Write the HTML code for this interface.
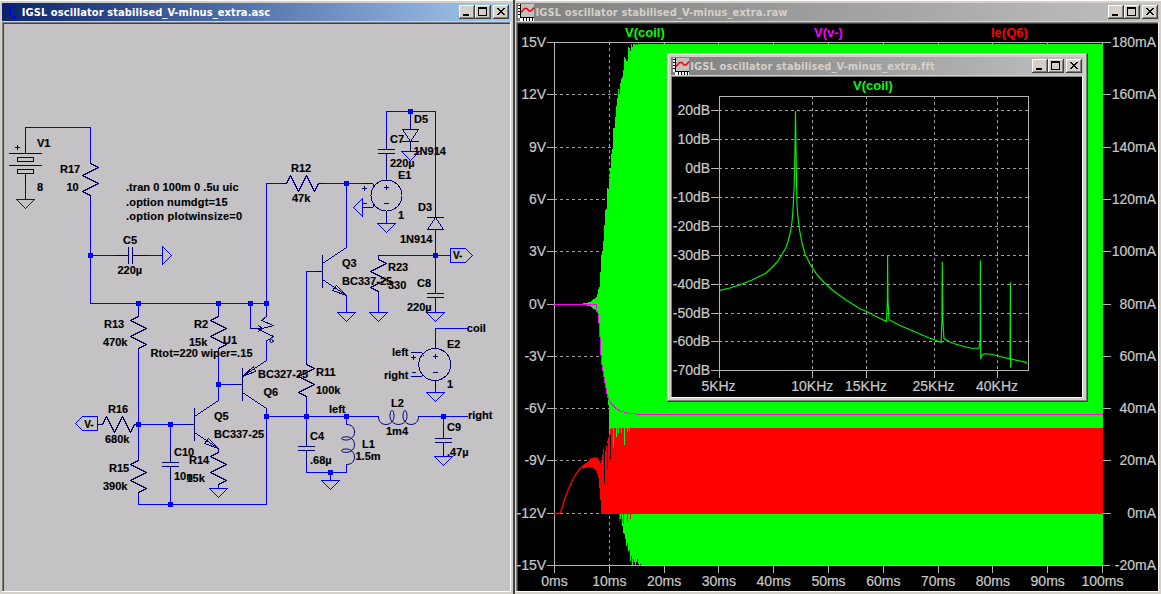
<!DOCTYPE html>
<html lang="en"><head><meta charset="utf-8"><title>IGSL oscillator stabilised_V-minus_extra</title>
<style>
html,body{margin:0;padding:0;background:#d4d0c8;overflow:hidden}
body{width:1161px;height:594px;position:relative}
svg{position:absolute;left:0;top:0;display:block}
text{white-space:pre}
.s{font:bold 11px "Liberation Sans",sans-serif;fill:#000;stroke:#000;stroke-width:.15px}
.f{font:bold 10px "Liberation Sans",sans-serif;fill:#000;stroke:#000;stroke-width:.2px}
.t{font:bold 11px "DejaVu Sans Condensed","DejaVu Sans","Liberation Sans",sans-serif;letter-spacing:.08px}
.a{font:14px "Liberation Sans",sans-serif;fill:#c8c8c8;stroke:#c8c8c8;stroke-width:.2px}
.l{font:bold 13px "Liberation Sans",sans-serif}
</style></head><body>
<svg width="1161" height="594" viewBox="0 0 1161 594">
<defs>
<linearGradient id="ga" x1="0" x2="1" y1="0" y2="0"><stop offset="0" stop-color="#0a246a"/><stop offset="1" stop-color="#a6caf0"/></linearGradient>
<linearGradient id="gi" x1="0" x2="1" y1="0" y2="0"><stop offset="0" stop-color="#808080"/><stop offset="1" stop-color="#c0c0c0"/></linearGradient>
</defs>
<rect x="0" y="0" width="1161" height="594" fill="#d4d0c8"/>
<rect x="0" y="0" width="1161" height="1" fill="#ffffff"/>
<g shape-rendering="crispEdges">
<rect x="2" y="3" width="509" height="18" fill="url(#ga)"/>
<rect x="2" y="22" width="509" height="1" fill="#808080"/>
<rect x="2" y="22" width="1" height="570" fill="#808080"/>
<rect x="3" y="23" width="508" height="1" fill="#404040"/>
<rect x="3" y="23" width="1" height="569" fill="#404040"/>
<rect x="4" y="24" width="506" height="567" fill="#c4c2c5"/>
<rect x="510" y="22" width="1" height="570" fill="#ffffff"/>
<rect x="2" y="591" width="509" height="1" fill="#ffffff"/>
<rect x="513" y="0" width="2" height="594" fill="#404040"/>
<rect x="515" y="0" width="1" height="594" fill="#dcd8d0"/>
</g>
<g stroke="#0000ff" fill="none" shape-rendering="crispEdges"><path d="M6 11.5H9"/><path d="M10 7V16" stroke-width="2"/></g>
<g stroke="#0000ff" fill="none"><path d="M11 8.5L15.5 4"/><path d="M11 14.5L17 19.5"/><path d="M12.5 17.5L15 15L15.5 18.5Z" fill="#0000ff"/></g>
<text x="21.7" y="16" class="t" fill="#fff" textLength="248.5">IGSL oscillator stabilised_V-minus_extra.asc</text>
<g shape-rendering="crispEdges" transform="translate(459 5)"><rect x="0" y="0" width="16" height="14" fill="#d4d0c8"/><path d="M0.5 13.5V0.5H15.5" stroke="#fff" fill="none"/><path d="M15.5 0V13.5H0" stroke="#404040" fill="none"/><path d="M14.5 1V12.5H1" stroke="#808080" fill="none"/><rect x="4" y="9" width="6" height="2" fill="#000"/></g>
<g shape-rendering="crispEdges" transform="translate(475 5)"><rect x="0" y="0" width="16" height="14" fill="#d4d0c8"/><path d="M0.5 13.5V0.5H15.5" stroke="#fff" fill="none"/><path d="M15.5 0V13.5H0" stroke="#404040" fill="none"/><path d="M14.5 1V12.5H1" stroke="#808080" fill="none"/><path d="M3.5 3.5H11.5V10.5H3.5Z" stroke="#000" fill="none"/><rect x="3" y="2" width="9" height="2" fill="#000"/></g>
<g shape-rendering="crispEdges" transform="translate(493 5)"><rect x="0" y="0" width="16" height="14" fill="#d4d0c8"/><path d="M0.5 13.5V0.5H15.5" stroke="#fff" fill="none"/><path d="M15.5 0V13.5H0" stroke="#404040" fill="none"/><path d="M14.5 1V12.5H1" stroke="#808080" fill="none"/><g fill="#000"><rect x="4" y="3" width="2" height="1"/><rect x="10" y="3" width="2" height="1"/><rect x="5" y="4" width="2" height="1"/><rect x="9" y="4" width="2" height="1"/><rect x="6" y="5" width="2" height="1"/><rect x="8" y="5" width="2" height="1"/><rect x="7" y="6" width="2" height="1"/><rect x="7" y="6" width="2" height="1"/><rect x="8" y="7" width="2" height="1"/><rect x="6" y="7" width="2" height="1"/><rect x="9" y="8" width="2" height="1"/><rect x="5" y="8" width="2" height="1"/><rect x="10" y="9" width="2" height="1"/><rect x="4" y="9" width="2" height="1"/></g></g>
<g shape-rendering="crispEdges" fill="none" stroke-linecap="square" stroke-linejoin="bevel">
<line x1="25.5" y1="127.5" x2="90.5" y2="127.5" stroke="#0000ff" stroke-width="1"/>
<line x1="25.5" y1="127.5" x2="25.5" y2="144.5" stroke="#0000ff" stroke-width="1"/>
<line x1="25.5" y1="144.5" x2="25.5" y2="153.5" stroke="#00007a" stroke-width="1"/>
<line x1="9.5" y1="153.5" x2="41.5" y2="153.5" stroke="#00007a" stroke-width="1"/>
<polygon points="17.5,157.5 33.5,157.5 33.5,161.5 17.5,161.5" fill="none" stroke="#00007a" stroke-width="1"/>
<line x1="9.5" y1="165.5" x2="41.5" y2="165.5" stroke="#00007a" stroke-width="1"/>
<polygon points="17.5,169.5 33.5,169.5 33.5,173.5 17.5,173.5" fill="none" stroke="#00007a" stroke-width="1"/>
<line x1="25.5" y1="173.5" x2="25.5" y2="183.5" stroke="#00007a" stroke-width="1"/>
<line x1="25.5" y1="183.5" x2="25.5" y2="199.5" stroke="#0000ff" stroke-width="1"/>
<polygon points="16.5,199.5 34.5,199.5 25.5,208.5" fill="none" stroke="#0000ff" stroke-width="1"/>
<line x1="15.5" y1="147.5" x2="19.5" y2="147.5" stroke="#00007a" stroke-width="1"/>
<line x1="17.5" y1="145.5" x2="17.5" y2="149.5" stroke="#00007a" stroke-width="1"/>
<line x1="90.5" y1="127.5" x2="90.5" y2="159.5" stroke="#0000ff" stroke-width="1"/>
<polyline points="90.5,159.5 90.5,163.5 98.5,167.5 82.5,175.5 98.5,183.5 82.5,191.5 90.5,195.5 90.5,199.5" fill="none" stroke="#00007a" stroke-width="1"/>
<line x1="90.5" y1="199.5" x2="90.5" y2="303.5" stroke="#0000ff" stroke-width="1"/>
<rect x="88" y="253" width="5" height="5" fill="#0000ff"/>
<line x1="90.5" y1="255.5" x2="114.5" y2="255.5" stroke="#0000ff" stroke-width="1"/>
<line x1="114.5" y1="255.5" x2="128.5" y2="255.5" stroke="#00007a" stroke-width="1"/>
<line x1="128.5" y1="247.5" x2="128.5" y2="263.5" stroke="#00007a" stroke-width="1"/>
<line x1="132.5" y1="247.5" x2="132.5" y2="263.5" stroke="#00007a" stroke-width="1"/>
<line x1="132.5" y1="255.5" x2="146.5" y2="255.5" stroke="#00007a" stroke-width="1"/>
<line x1="146.5" y1="255.5" x2="162.5" y2="255.5" stroke="#0000ff" stroke-width="1"/>
<polygon points="162.5,246.5 162.5,264.5 171.5,255.5" fill="none" stroke="#0000ff" stroke-width="1"/>
<line x1="90.5" y1="303.5" x2="266.5" y2="303.5" stroke="#0000ff" stroke-width="1"/>
<rect x="136" y="301" width="5" height="5" fill="#0000ff"/>
<rect x="216" y="301" width="5" height="5" fill="#0000ff"/>
<rect x="248" y="301" width="5" height="5" fill="#0000ff"/>
<rect x="264" y="301" width="5" height="5" fill="#0000ff"/>
<line x1="138.5" y1="303.5" x2="138.5" y2="312.5" stroke="#0000ff" stroke-width="1"/>
<polyline points="138.5,312.5 138.5,316.5 130.5,320.5 146.5,328.5 130.5,336.5 146.5,344.5 138.5,348.5 138.5,352.5" fill="none" stroke="#00007a" stroke-width="1"/>
<line x1="138.5" y1="352.5" x2="138.5" y2="456.5" stroke="#0000ff" stroke-width="1"/>
<rect x="136" y="422" width="5" height="5" fill="#0000ff"/>
<polyline points="138.5,456.5 138.5,460.5 130.5,464.5 146.5,472.5 130.5,480.5 146.5,488.5 138.5,492.5 138.5,496.5" fill="none" stroke="#00007a" stroke-width="1"/>
<line x1="138.5" y1="496.5" x2="138.5" y2="504.5" stroke="#0000ff" stroke-width="1"/>
<line x1="138.5" y1="504.5" x2="266.5" y2="504.5" stroke="#0000ff" stroke-width="1"/>
<rect x="168" y="502" width="5" height="5" fill="#0000ff"/>
<polygon points="97.5,416.5 82.5,416.5 75.5,423.5 82.5,430.5 97.5,430.5" fill="none" stroke="#0000ff" stroke-width="1"/>
<line x1="97.5" y1="424.5" x2="98.5" y2="424.5" stroke="#00007a" stroke-width="1"/>
<polyline points="98.5,424.5 102.5,424.5 106.5,416.5 114.5,432.5 122.5,416.5 130.5,432.5 134.5,424.5 138.5,424.5" fill="none" stroke="#00007a" stroke-width="1"/>
<line x1="138.5" y1="424.5" x2="186.5" y2="424.5" stroke="#0000ff" stroke-width="1"/>
<rect x="168" y="422" width="5" height="5" fill="#0000ff"/>
<line x1="170.5" y1="424.5" x2="170.5" y2="448.5" stroke="#0000ff" stroke-width="1"/>
<line x1="170.5" y1="448.5" x2="170.5" y2="462.5" stroke="#00007a" stroke-width="1"/>
<line x1="162.5" y1="462.5" x2="178.5" y2="462.5" stroke="#00007a" stroke-width="1"/>
<line x1="162.5" y1="466.5" x2="178.5" y2="466.5" stroke="#00007a" stroke-width="1"/>
<line x1="170.5" y1="466.5" x2="170.5" y2="480.5" stroke="#00007a" stroke-width="1"/>
<line x1="170.5" y1="480.5" x2="170.5" y2="504.5" stroke="#0000ff" stroke-width="1"/>
<line x1="186.5" y1="424.5" x2="194.5" y2="424.5" stroke="#00007a" stroke-width="1"/>
<line x1="194.5" y1="408.5" x2="194.5" y2="440.5" stroke="#00007a" stroke-width="1"/>
<line x1="194.5" y1="416.5" x2="218.5" y2="400.5" stroke="#00007a" stroke-width="1"/>
<line x1="194.5" y1="432.5" x2="218.5" y2="448.5" stroke="#00007a" stroke-width="1"/>
<polygon points="218.5,448.5 204.5,443.5 208.5,438.5" fill="none" stroke="#00007a" stroke-width="1"/>
<line x1="218.5" y1="400.5" x2="218.5" y2="352.5" stroke="#0000ff" stroke-width="1"/>
<line x1="218.5" y1="303.5" x2="218.5" y2="312.5" stroke="#0000ff" stroke-width="1"/>
<polyline points="218.5,312.5 218.5,316.5 210.5,320.5 226.5,328.5 210.5,336.5 226.5,344.5 218.5,348.5 218.5,352.5" fill="none" stroke="#00007a" stroke-width="1"/>
<rect x="216" y="382" width="5" height="5" fill="#0000ff"/>
<line x1="218.5" y1="384.5" x2="234.5" y2="384.5" stroke="#0000ff" stroke-width="1"/>
<polyline points="218.5,448.5 218.5,452.5 210.5,456.5 226.5,464.5 210.5,472.5 226.5,480.5 218.5,484.5 218.5,488.5" fill="none" stroke="#00007a" stroke-width="1"/>
<polygon points="209.5,488.5 227.5,488.5 218.5,497.5" fill="none" stroke="#0000ff" stroke-width="1"/>
<line x1="234.5" y1="384.5" x2="242.5" y2="384.5" stroke="#00007a" stroke-width="1"/>
<line x1="242.5" y1="368.5" x2="242.5" y2="400.5" stroke="#00007a" stroke-width="1"/>
<line x1="242.5" y1="376.5" x2="266.5" y2="360.5" stroke="#00007a" stroke-width="1"/>
<line x1="242.5" y1="392.5" x2="266.5" y2="408.5" stroke="#00007a" stroke-width="1"/>
<polygon points="242.5,376.5 253.5,366.5 255.5,371.5" fill="none" stroke="#00007a" stroke-width="1"/>
<line x1="266.5" y1="408.5" x2="266.5" y2="504.5" stroke="#0000ff" stroke-width="1"/>
<rect x="264" y="414" width="5" height="5" fill="#0000ff"/>
<line x1="266.5" y1="303.5" x2="266.5" y2="311.5" stroke="#0000ff" stroke-width="1"/>
<line x1="266.5" y1="311.5" x2="266.5" y2="316.5" stroke="#00007a" stroke-width="1"/>
<polyline points="266.5,316.5 261.5,320.5 273.5,325.5 258.5,329.5 273.5,336.5 267.5,340.5" fill="none" stroke="#00007a" stroke-width="1"/>
<circle cx="271.5" cy="341" r="1.6" stroke="#00007a" shape-rendering="auto"/>
<line x1="266.5" y1="340.5" x2="266.5" y2="360.5" stroke="#0000ff" stroke-width="1"/>
<line x1="250.5" y1="303.5" x2="250.5" y2="328.5" stroke="#0000ff" stroke-width="1"/>
<line x1="250.5" y1="328.5" x2="262.5" y2="328.5" stroke="#00007a" stroke-width="1"/>
<polyline points="258.5,325.5 262.5,328.5 258.5,331.5" fill="none" stroke="#00007a" stroke-width="1"/>
<line x1="266.5" y1="183.5" x2="266.5" y2="303.5" stroke="#0000ff" stroke-width="1"/>
<line x1="266.5" y1="183.5" x2="282.5" y2="183.5" stroke="#0000ff" stroke-width="1"/>
<polyline points="282.5,183.5 286.5,183.5 290.5,175.5 298.5,191.5 306.5,175.5 314.5,191.5 318.5,183.5 322.5,183.5" fill="none" stroke="#00007a" stroke-width="1"/>
<line x1="322.5" y1="183.5" x2="362.5" y2="183.5" stroke="#0000ff" stroke-width="1"/>
<rect x="344" y="181" width="5" height="5" fill="#0000ff"/>
<line x1="346.5" y1="183.5" x2="346.5" y2="247.5" stroke="#0000ff" stroke-width="1"/>
<line x1="306.5" y1="271.5" x2="314.5" y2="271.5" stroke="#0000ff" stroke-width="1"/>
<line x1="314.5" y1="271.5" x2="322.5" y2="271.5" stroke="#00007a" stroke-width="1"/>
<line x1="322.5" y1="255.5" x2="322.5" y2="287.5" stroke="#00007a" stroke-width="1"/>
<line x1="322.5" y1="263.5" x2="346.5" y2="247.5" stroke="#00007a" stroke-width="1"/>
<line x1="322.5" y1="279.5" x2="346.5" y2="295.5" stroke="#00007a" stroke-width="1"/>
<polygon points="346.5,295.5 332.5,290.5 336.5,285.5" fill="none" stroke="#00007a" stroke-width="1"/>
<line x1="346.5" y1="295.5" x2="346.5" y2="312.5" stroke="#0000ff" stroke-width="1"/>
<polygon points="337.5,312.5 355.5,312.5 346.5,321.5" fill="none" stroke="#0000ff" stroke-width="1"/>
<line x1="306.5" y1="271.5" x2="306.5" y2="360.5" stroke="#0000ff" stroke-width="1"/>
<polyline points="306.5,360.5 306.5,364.5 314.5,368.5 298.5,376.5 314.5,384.5 298.5,392.5 306.5,396.5 306.5,400.5" fill="none" stroke="#00007a" stroke-width="1"/>
<line x1="306.5" y1="400.5" x2="306.5" y2="416.5" stroke="#0000ff" stroke-width="1"/>
<line x1="266.5" y1="416.5" x2="378.5" y2="416.5" stroke="#0000ff" stroke-width="1"/>
<line x1="418.5" y1="416.5" x2="467.5" y2="416.5" stroke="#0000ff" stroke-width="1"/>
<rect x="304" y="414" width="5" height="5" fill="#0000ff"/>
<rect x="344" y="414" width="5" height="5" fill="#0000ff"/>
<rect x="441" y="414" width="5" height="5" fill="#0000ff"/>
<line x1="306.5" y1="416.5" x2="306.5" y2="432.5" stroke="#0000ff" stroke-width="1"/>
<line x1="306.5" y1="432.5" x2="306.5" y2="446.5" stroke="#00007a" stroke-width="1"/>
<line x1="298.5" y1="446.5" x2="314.5" y2="446.5" stroke="#00007a" stroke-width="1"/>
<line x1="298.5" y1="450.5" x2="314.5" y2="450.5" stroke="#00007a" stroke-width="1"/>
<line x1="306.5" y1="450.5" x2="306.5" y2="464.5" stroke="#00007a" stroke-width="1"/>
<line x1="306.5" y1="464.5" x2="306.5" y2="472.5" stroke="#0000ff" stroke-width="1"/>
<line x1="306.5" y1="472.5" x2="346.5" y2="472.5" stroke="#0000ff" stroke-width="1"/>
<rect x="328" y="470" width="5" height="5" fill="#0000ff"/>
<line x1="330.5" y1="472.5" x2="330.5" y2="480.5" stroke="#0000ff" stroke-width="1"/>
<polygon points="321.5,480.5 339.5,480.5 330.5,489.5" fill="none" stroke="#0000ff" stroke-width="1"/>
<line x1="346.5" y1="416.5" x2="346.5" y2="424.5" stroke="#0000ff" stroke-width="1"/>
<line x1="346.5" y1="464.5" x2="346.5" y2="472.5" stroke="#0000ff" stroke-width="1"/>
<line x1="443.5" y1="416.5" x2="443.5" y2="424.5" stroke="#0000ff" stroke-width="1"/>
<line x1="443.5" y1="424.5" x2="443.5" y2="438.5" stroke="#00007a" stroke-width="1"/>
<line x1="435.5" y1="438.5" x2="451.5" y2="438.5" stroke="#00007a" stroke-width="1"/>
<line x1="435.5" y1="442.5" x2="451.5" y2="442.5" stroke="#00007a" stroke-width="1"/>
<line x1="443.5" y1="442.5" x2="443.5" y2="456.5" stroke="#00007a" stroke-width="1"/>
<polygon points="434.5,456.5 452.5,456.5 443.5,465.5" fill="none" stroke="#0000ff" stroke-width="1"/>
<circle cx="386.5" cy="195.5" r="15.5" fill="none" stroke="#00007a"/>
<line x1="386.5" y1="171.5" x2="386.5" y2="179.5" stroke="#00007a" stroke-width="1"/>
<line x1="386.5" y1="211.5" x2="386.5" y2="219.5" stroke="#00007a" stroke-width="1"/>
<line x1="384.5" y1="187.5" x2="388.5" y2="187.5" stroke="#00007a" stroke-width="1"/>
<line x1="386.5" y1="185.5" x2="386.5" y2="189.5" stroke="#00007a" stroke-width="1"/>
<line x1="384.5" y1="203.5" x2="388.5" y2="203.5" stroke="#00007a" stroke-width="1"/>
<path d="M362.5 183.5 H371 Q374 183.5 374 186" fill="none" stroke="#00007a"/>
<path d="M362.5 207.5 H371 Q374 207.5 374 205" fill="none" stroke="#00007a"/>
<line x1="362.5" y1="188.5" x2="366.5" y2="188.5" stroke="#00007a" stroke-width="1"/>
<line x1="364.5" y1="186.5" x2="364.5" y2="190.5" stroke="#00007a" stroke-width="1"/>
<line x1="363.5" y1="203.5" x2="366.5" y2="203.5" stroke="#00007a" stroke-width="1"/>
<polygon points="362.5,198.5 362.5,216.5 353.5,207.5" fill="none" stroke="#0000ff" stroke-width="1"/>
<line x1="386.5" y1="219.5" x2="386.5" y2="223.5" stroke="#0000ff" stroke-width="1"/>
<polygon points="377.5,223.5 395.5,223.5 386.5,232.5" fill="none" stroke="#0000ff" stroke-width="1"/>
<line x1="386.5" y1="111.5" x2="386.5" y2="135.5" stroke="#0000ff" stroke-width="1"/>
<line x1="386.5" y1="135.5" x2="386.5" y2="149.5" stroke="#00007a" stroke-width="1"/>
<line x1="378.5" y1="149.5" x2="394.5" y2="149.5" stroke="#00007a" stroke-width="1"/>
<line x1="378.5" y1="153.5" x2="394.5" y2="153.5" stroke="#00007a" stroke-width="1"/>
<line x1="386.5" y1="153.5" x2="386.5" y2="167.5" stroke="#00007a" stroke-width="1"/>
<line x1="386.5" y1="167.5" x2="386.5" y2="171.5" stroke="#0000ff" stroke-width="1"/>
<line x1="386.5" y1="111.5" x2="435.5" y2="111.5" stroke="#0000ff" stroke-width="1"/>
<rect x="408" y="109" width="5" height="5" fill="#0000ff"/>
<line x1="410.5" y1="119.5" x2="410.5" y2="129.5" stroke="#00007a" stroke-width="1"/>
<polygon points="402.5,129.5 418.5,129.5 410.5,141.5" fill="none" stroke="#00007a" stroke-width="1"/>
<line x1="402.5" y1="141.5" x2="418.5" y2="141.5" stroke="#00007a" stroke-width="1"/>
<line x1="410.5" y1="141.5" x2="410.5" y2="151.5" stroke="#00007a" stroke-width="1"/>
<line x1="410.5" y1="111.5" x2="410.5" y2="119.5" stroke="#0000ff" stroke-width="1"/>
<polygon points="401.5,151.5 419.5,151.5 410.5,160.5" fill="none" stroke="#0000ff" stroke-width="1"/>
<line x1="435.5" y1="111.5" x2="435.5" y2="207.5" stroke="#0000ff" stroke-width="1"/>
<line x1="435.5" y1="207.5" x2="435.5" y2="217.5" stroke="#00007a" stroke-width="1"/>
<line x1="427.5" y1="217.5" x2="443.5" y2="217.5" stroke="#00007a" stroke-width="1"/>
<polygon points="427.5,229.5 443.5,229.5 435.5,217.5" fill="none" stroke="#00007a" stroke-width="1"/>
<line x1="435.5" y1="229.5" x2="435.5" y2="239.5" stroke="#00007a" stroke-width="1"/>
<line x1="435.5" y1="239.5" x2="435.5" y2="279.5" stroke="#0000ff" stroke-width="1"/>
<rect x="433" y="253" width="5" height="5" fill="#0000ff"/>
<line x1="378.5" y1="255.5" x2="450.5" y2="255.5" stroke="#0000ff" stroke-width="1"/>
<polygon points="450.5,248.5 465.5,248.5 472.5,255.5 465.5,262.5 450.5,262.5" fill="none" stroke="#0000ff" stroke-width="1"/>
<polyline points="378.5,255.5 378.5,259.5 386.5,263.5 370.5,271.5 386.5,279.5 370.5,287.5 378.5,291.5 378.5,295.5" fill="none" stroke="#00007a" stroke-width="1"/>
<line x1="378.5" y1="295.5" x2="378.5" y2="312.5" stroke="#0000ff" stroke-width="1"/>
<polygon points="369.5,312.5 387.5,312.5 378.5,321.5" fill="none" stroke="#0000ff" stroke-width="1"/>
<line x1="435.5" y1="279.5" x2="435.5" y2="293.5" stroke="#00007a" stroke-width="1"/>
<line x1="427.5" y1="293.5" x2="443.5" y2="293.5" stroke="#00007a" stroke-width="1"/>
<line x1="427.5" y1="297.5" x2="443.5" y2="297.5" stroke="#00007a" stroke-width="1"/>
<line x1="435.5" y1="297.5" x2="435.5" y2="311.5" stroke="#00007a" stroke-width="1"/>
<line x1="435.5" y1="311.5" x2="435.5" y2="312.5" stroke="#0000ff" stroke-width="1"/>
<polygon points="426.5,312.5 444.5,312.5 435.5,321.5" fill="none" stroke="#0000ff" stroke-width="1"/>
<circle cx="434.8" cy="364.5" r="16" fill="none" stroke="#00007a"/>
<line x1="435.5" y1="340.5" x2="435.5" y2="348.5" stroke="#00007a" stroke-width="1"/>
<line x1="435.5" y1="380.5" x2="435.5" y2="388.5" stroke="#00007a" stroke-width="1"/>
<line x1="433.5" y1="356.5" x2="437.5" y2="356.5" stroke="#00007a" stroke-width="1"/>
<line x1="435.5" y1="354.5" x2="435.5" y2="358.5" stroke="#00007a" stroke-width="1"/>
<line x1="433.5" y1="372.5" x2="437.5" y2="372.5" stroke="#00007a" stroke-width="1"/>
<path d="M411.5 352.5 H420 Q423 352.5 423 355" fill="none" stroke="#00007a"/>
<path d="M411.5 376.5 H420 Q423 376.5 423 374" fill="none" stroke="#00007a"/>
<line x1="411.5" y1="357.5" x2="415.5" y2="357.5" stroke="#00007a" stroke-width="1"/>
<line x1="413.5" y1="355.5" x2="413.5" y2="359.5" stroke="#00007a" stroke-width="1"/>
<line x1="412.5" y1="372.5" x2="415.5" y2="372.5" stroke="#00007a" stroke-width="1"/>
<line x1="435.5" y1="328.5" x2="435.5" y2="340.5" stroke="#0000ff" stroke-width="1"/>
<line x1="435.5" y1="328.5" x2="467.5" y2="328.5" stroke="#0000ff" stroke-width="1"/>
<line x1="435.5" y1="388.5" x2="435.5" y2="392.5" stroke="#0000ff" stroke-width="1"/>
<polygon points="426.5,392.5 444.5,392.5 435.5,401.5" fill="none" stroke="#0000ff" stroke-width="1"/>
</g>
<g fill="none" stroke="#00007a">
<path d="M378.5 416.5C378.5 422 382 424.5 386 424.5C390.5 424.5 394 421 394 416.5C394 412.5 393 410.5 392 410.5C391 410.5 390 412.5 390 416.5C390 421 394 424.5 398.5 424.5C403 424.5 407 421 407 416.5C407 412.5 406 410.5 405 410.5C404 410.5 403 412.5 403 416.5C403 421 407 424.5 411 424.5C415 424.5 418.5 422 418.5 416.5"/>
<path d="M346.5 424.5C352 424.5 354.5 428 354.5 432C354.5 436.5 351 440 346.5 440C343 440 341.5 439.2 341.5 438.5C341.5 437.5 343 436.8 346.5 436.8C351 436.8 354.5 440 354.5 444.5C354.5 449 351 452.4 346.5 452.4C343 452.4 341.5 451.5 341.5 450.6C341.5 449.7 343 449 346.5 449C351 449 354.5 452.5 354.5 457C354.5 461 352 464.5 346.5 464.5"/>
</g>
<text x="37" y="146.5" class="s">V1</text>
<text x="37" y="190.5" class="s">8</text>
<text x="60" y="173" class="s">R17</text>
<text x="66.5" y="190.5" class="s">10</text>
<text x="126" y="190.5" class="s" textLength="112.5" lengthAdjust="spacing">.tran 0 100m 0 .5u uic</text>
<text x="126" y="206.2" class="s" textLength="101.5" lengthAdjust="spacing">.option numdgt=15</text>
<text x="126" y="220.4" class="s" textLength="116" lengthAdjust="spacing">.option plotwinsize=0</text>
<text x="123" y="243.5" class="s">C5</text>
<text x="117.5" y="273.5" class="s">220µ</text>
<text x="104" y="327.5" class="s">R13</text>
<text x="103" y="346" class="s">470k</text>
<text x="194" y="327.5" class="s">R2</text>
<text x="189" y="346" class="s">15k</text>
<text x="223" y="343.5" class="s">U1</text>
<text x="150.5" y="357" class="s" textLength="102" lengthAdjust="spacing">Rtot=220 wiper=.15</text>
<text x="258" y="377.5" class="s">BC327-25</text>
<text x="263.5" y="395.5" class="s">Q6</text>
<text x="108" y="412.5" class="s">R16</text>
<text x="105" y="442.5" class="s">680k</text>
<text x="214" y="419.5" class="s">Q5</text>
<text x="214" y="437.5" class="s">BC337-25</text>
<text x="174" y="456" class="s">C10</text>
<text x="174" y="480" class="s">10n</text>
<text x="189" y="464" class="s">R14</text>
<text x="186.5" y="481.5" class="s">15k</text>
<text x="109" y="471.5" class="s">R15</text>
<text x="103" y="490" class="s">390k</text>
<text x="291" y="172" class="s">R12</text>
<text x="292" y="201.5" class="s">47k</text>
<text x="342" y="267" class="s">Q3</text>
<text x="342" y="285" class="s">BC337-25</text>
<text x="388" y="270.5" class="s">R23</text>
<text x="388" y="289" class="s">330</text>
<text x="417" y="286.5" class="s">C8</text>
<text x="407" y="311" class="s">220µ</text>
<text x="400" y="243" class="s">1N914</text>
<text x="418" y="210.5" class="s">D3</text>
<text x="398" y="218.5" class="s">1</text>
<text x="398" y="178.5" class="s">E1</text>
<text x="390" y="167" class="s">220µ</text>
<text x="390" y="142.5" class="s">C7</text>
<text x="414" y="122.5" class="s">D5</text>
<text x="413.5" y="154.5" class="s">1N914</text>
<text x="466.8" y="332" class="s">coil</text>
<text x="447" y="347.5" class="s">E2</text>
<text x="392" y="355.5" class="s">left</text>
<text x="384" y="379" class="s">right</text>
<text x="447" y="387.5" class="s">1</text>
<text x="316" y="375.5" class="s">R11</text>
<text x="316" y="394" class="s">100k</text>
<text x="329" y="412.5" class="s">left</text>
<text x="391" y="406.5" class="s">L2</text>
<text x="386" y="434.5" class="s">1m4</text>
<text x="468" y="419" class="s">right</text>
<text x="447" y="431" class="s">C9</text>
<text x="447" y="455.5" class="s">.47µ</text>
<text x="310" y="439.5" class="s">C4</text>
<text x="310" y="464" class="s">.68µ</text>
<text x="362" y="447.5" class="s">L1</text>
<text x="355.5" y="459.5" class="s">1.5m</text>
<text x="453" y="258.5" class="f">V-</text>
<text x="84.2" y="427.5" class="f">V-</text>
<g shape-rendering="crispEdges">
<rect x="516" y="3" width="643" height="18" fill="url(#gi)"/>
<rect x="516" y="22" width="643" height="1" fill="#808080"/>
<rect x="516" y="22" width="1" height="570" fill="#808080"/>
<rect x="517" y="23" width="642" height="1" fill="#404040"/>
<rect x="517" y="23" width="1" height="569" fill="#404040"/>
<rect x="518" y="24" width="640" height="567" fill="#000"/>
<rect x="1158" y="22" width="1" height="570" fill="#fff"/>
<rect x="516" y="591" width="643" height="1" fill="#fff"/>
</g>
<g transform="translate(518 4)"><g shape-rendering="crispEdges"><rect x="3" y="0" width="13" height="13" fill="#c0c0c0"/><rect x="0" y="0" width="2" height="14" fill="#fff"/><rect x="2" y="14" width="14" height="3" fill="#fff"/><path d="M2.5 0V13.5H16" stroke="#000" fill="none"/><path d="M0 1.5H2M0 4.5H2M0 7.5H2M0 10.5H2M5.5 14V17M8.5 14V17M11.5 14V17M14.5 14V17" stroke="#000" fill="none"/></g><path d="M3 8.5L6.5 4.5H9L11 7H13L16 3.5" stroke="#f00" stroke-width="1.6" fill="none"/></g>
<text x="535.5" y="16" class="t" fill="#d4d0c8" textLength="252">IGSL oscillator stabilised_V-minus_extra.raw</text>
<g shape-rendering="crispEdges" transform="translate(1108 5)"><rect x="0" y="0" width="16" height="14" fill="#d4d0c8"/><path d="M0.5 13.5V0.5H15.5" stroke="#fff" fill="none"/><path d="M15.5 0V13.5H0" stroke="#404040" fill="none"/><path d="M14.5 1V12.5H1" stroke="#808080" fill="none"/><rect x="4" y="9" width="6" height="2" fill="#000"/></g>
<g shape-rendering="crispEdges" transform="translate(1124 5)"><rect x="0" y="0" width="16" height="14" fill="#d4d0c8"/><path d="M0.5 13.5V0.5H15.5" stroke="#fff" fill="none"/><path d="M15.5 0V13.5H0" stroke="#404040" fill="none"/><path d="M14.5 1V12.5H1" stroke="#808080" fill="none"/><path d="M3.5 3.5H11.5V10.5H3.5Z" stroke="#000" fill="none"/><rect x="3" y="2" width="9" height="2" fill="#000"/></g>
<g shape-rendering="crispEdges" transform="translate(1142 5)"><rect x="0" y="0" width="16" height="14" fill="#d4d0c8"/><path d="M0.5 13.5V0.5H15.5" stroke="#fff" fill="none"/><path d="M15.5 0V13.5H0" stroke="#404040" fill="none"/><path d="M14.5 1V12.5H1" stroke="#808080" fill="none"/><g fill="#000"><rect x="4" y="3" width="2" height="1"/><rect x="10" y="3" width="2" height="1"/><rect x="5" y="4" width="2" height="1"/><rect x="9" y="4" width="2" height="1"/><rect x="6" y="5" width="2" height="1"/><rect x="8" y="5" width="2" height="1"/><rect x="7" y="6" width="2" height="1"/><rect x="7" y="6" width="2" height="1"/><rect x="8" y="7" width="2" height="1"/><rect x="6" y="7" width="2" height="1"/><rect x="9" y="8" width="2" height="1"/><rect x="5" y="8" width="2" height="1"/><rect x="10" y="9" width="2" height="1"/><rect x="4" y="9" width="2" height="1"/></g></g>
<g shape-rendering="crispEdges" fill="none" stroke="#b4b4b4">
<path d="M547 42.5H1111M554.5 42V566M547 565.5H1110"/>
<path d="M547 94.5H554"/>
<path d="M554 94.5H1103" stroke-dasharray="3 3" stroke="#a0a0a0"/>
<path d="M1103 94.5H1111"/>
<path d="M547 147.5H554"/>
<path d="M554 147.5H1103" stroke-dasharray="3 3" stroke="#a0a0a0"/>
<path d="M1103 147.5H1111"/>
<path d="M547 199.5H554"/>
<path d="M554 199.5H1103" stroke-dasharray="3 3" stroke="#a0a0a0"/>
<path d="M1103 199.5H1111"/>
<path d="M547 251.5H554"/>
<path d="M554 251.5H1103" stroke-dasharray="3 3" stroke="#a0a0a0"/>
<path d="M1103 251.5H1111"/>
<path d="M547 304.5H554"/>
<path d="M554 304.5H1103" stroke-dasharray="3 3" stroke="#a0a0a0"/>
<path d="M1103 304.5H1111"/>
<path d="M547 356.5H554"/>
<path d="M554 356.5H1103" stroke-dasharray="3 3" stroke="#a0a0a0"/>
<path d="M1103 356.5H1111"/>
<path d="M547 408.5H554"/>
<path d="M554 408.5H1103" stroke-dasharray="3 3" stroke="#a0a0a0"/>
<path d="M1103 408.5H1111"/>
<path d="M547 460.5H554"/>
<path d="M554 460.5H1103" stroke-dasharray="3 3" stroke="#a0a0a0"/>
<path d="M1103 460.5H1111"/>
<path d="M547 513.5H554"/>
<path d="M554 513.5H1103" stroke-dasharray="3 3" stroke="#a0a0a0"/>
<path d="M1103 513.5H1111"/>
<path d="M554.5 565V573"/>
<path d="M609.5 565V573"/>
<path d="M609.5 42V565" stroke-dasharray="3 3" stroke="#a0a0a0"/>
<path d="M609.5 42V45"/>
<path d="M664.5 565V573"/>
<path d="M664.5 42V565" stroke-dasharray="3 3" stroke="#a0a0a0"/>
<path d="M664.5 42V45"/>
<path d="M718.5 565V573"/>
<path d="M718.5 42V565" stroke-dasharray="3 3" stroke="#a0a0a0"/>
<path d="M718.5 42V45"/>
<path d="M773.5 565V573"/>
<path d="M773.5 42V565" stroke-dasharray="3 3" stroke="#a0a0a0"/>
<path d="M773.5 42V45"/>
<path d="M828.5 565V573"/>
<path d="M828.5 42V565" stroke-dasharray="3 3" stroke="#a0a0a0"/>
<path d="M828.5 42V45"/>
<path d="M883.5 565V573"/>
<path d="M883.5 42V565" stroke-dasharray="3 3" stroke="#a0a0a0"/>
<path d="M883.5 42V45"/>
<path d="M938.5 565V573"/>
<path d="M938.5 42V565" stroke-dasharray="3 3" stroke="#a0a0a0"/>
<path d="M938.5 42V45"/>
<path d="M992.5 565V573"/>
<path d="M992.5 42V565" stroke-dasharray="3 3" stroke="#a0a0a0"/>
<path d="M992.5 42V45"/>
<path d="M1047.5 565V573"/>
<path d="M1047.5 42V565" stroke-dasharray="3 3" stroke="#a0a0a0"/>
<path d="M1047.5 42V45"/>
<path d="M1102.5 565V573"/>
<path d="M1102.5 42V45"/>
</g>
<polygon points="583,303.4 584,303.4 584,303.2 585,303.2 585,303.0 586,303.0 586,302.8 587,302.8 587,302.5 588,302.5 588,302.3 589,302.3 589,302.1 590,302.1 590,301.6 591,301.6 591,300.9 592,300.9 592,300.1 593,300.1 593,299.4 594,299.4 594,298.6 595,298.6 595,297.8 596,297.8 596,297.0 597,297.0 597,294.3 598,294.3 598,288.5 599,288.5 599,287.3 600,287.3 600,272.1 601,272.1 601,254.5 602,254.5 602,251.0 603,251.0 603,240.6 604,240.6 604,224.8 605,224.8 605,210.3 606,210.3 606,209.4 607,209.4 607,188.1 608,188.1 608,188.6 609,188.6 609,178.2 610,178.2 610,167.8 611,167.8 611,154.3 612,154.3 612,149.3 613,149.3 613,128.3 614,128.3 614,128.2 615,128.2 615,116.6 616,116.6 616,105.8 617,105.8 617,98.2 618,98.2 618,88.7 619,88.7 619,94.0 620,94.0 620,83.2 621,83.2 621,78.8 622,78.8 622,76.6 623,76.6 623,70.4 624,70.4 624,56.5 625,56.5 625,59.0 626,59.0 626,60.8 627,60.8 627,60.6 628,60.6 628,46.8 629,46.8 629,47.7 630,47.7 630,50.8 631,50.8 631,44.0 632,44.0 632,46.5 633,46.5 633,44.0 634,44.0 634,44.0 635,44.0 635,45.0 636,45.0 636,44.0 637,44.0 637,44.5 638,44.5 638,44.3 639,44.3 639,44.1 640,44.1 640,44.0 641,44.0 641,44.0 642,44.0 1103,44.0 1103,564.5 642,564.5 641,564.5 641,564.3 640,564.3 640,564.5 639,564.5 639,563.6 638,563.6 638,558.9 637,558.9 637,562.4 636,562.4 636,564.5 635,564.5 635,562.4 634,562.4 634,558.5 633,558.5 633,564.5 632,564.5 632,556.0 631,556.0 631,560.9 630,560.9 630,549.5 629,549.5 629,551.2 628,551.2 628,543.0 627,543.0 627,545.8 626,545.8 626,539.2 625,539.2 625,533.7 624,533.7 624,533.2 623,533.2 623,526.3 622,526.3 622,515.1 621,515.1 621,519.1 620,519.1 620,504.3 619,504.3 619,504.4 618,504.4 618,502.2 617,502.2 617,492.9 616,492.9 616,487.5 615,487.5 615,477.9 614,477.9 614,472.1 613,472.1 613,476.2 612,476.2 612,464.0 611,464.0 611,452.0 610,452.0 610,440.0 609,440.0 609,405.0 608,405.0 608,396.8 607,396.8 607,391.1 606,391.1 606,385.6 605,385.6 605,379.9 604,379.9 604,374.1 603,374.1 603,367.8 602,367.8 602,361.3 601,361.3 601,345.8 600,345.8 600,330.0 599,330.0 599,316.0 598,316.0 598,311.0 597,311.0 597,310.4 596,310.4 596,309.9 595,309.9 595,309.3 594,309.3 594,308.6 593,308.6 593,307.9 592,307.9 592,307.1 591,307.1 591,306.4 590,306.4 590,305.9 589,305.9 589,305.7 588,305.7 588,305.5 587,305.5 587,305.2 586,305.2 586,305.0 585,305.0 585,304.8 584,304.8 584,304.6 583,304.6" fill="#00ff00" shape-rendering="crispEdges"/>
<polyline points="554,513.5 560,513.5 562,508 565,498 568,490 572,481 576,474 580,468.5 584,465" fill="none" stroke="#ff0000" stroke-width="1.3"/>
<polygon points="583,465.5 586,463 588,461 590,460 591,457 592,461 593,456 594,459 595,455 596,460 597,454 598,461 599,458 600,463 601,462 602,458 603,452 604,447 605,452 606,450 607,442 608,440 609,437 610,431 611,428 1103,428 1103,514 601,514 600.5,500 599.5,488 598.5,478 597,472 595,469 592,467 588,467 585,468 583,469" fill="#ff0000" shape-rendering="crispEdges"/>
<g shape-rendering="crispEdges">
<rect x="613" y="428" width="1" height="19" fill="#00ff00"/>
<rect x="616" y="428" width="1" height="9" fill="#00ff00"/>
<rect x="618" y="428" width="1" height="5" fill="#00ff00"/>
<rect x="621" y="428" width="1" height="5" fill="#00ff00"/>
<rect x="624" y="428" width="1" height="17" fill="#00ff00"/>
<rect x="627" y="428" width="1" height="4" fill="#00ff00"/>
<rect x="629" y="428" width="1" height="3" fill="#00ff00"/>
<rect x="619" y="514" width="1" height="7" fill="#ff0000"/>
<rect x="623" y="514" width="1" height="10" fill="#ff0000"/>
<rect x="627" y="514" width="1" height="8" fill="#ff0000"/>
<rect x="630" y="514" width="1" height="5" fill="#ff0000"/>
<rect x="604" y="449" width="1" height="34" fill="#000"/>
<rect x="607" y="443" width="1" height="27" fill="#000"/>
<rect x="610" y="435" width="1" height="24" fill="#000"/>
</g>
<polyline points="554,304.5 596.5,304.5 596.5,311 597.7,311 598.5,316 600,336.5 601.3,360 603.3,373 605.4,385 607.4,396 610.4,403 615.5,408 620,411 630,413.5 640,414.5 1103,414.5" fill="none" stroke="#ff00ff" stroke-width="1" shape-rendering="crispEdges"/>
<text x="546.2" y="47" class="a" text-anchor="end">15V</text>
<text x="546.2" y="99" class="a" text-anchor="end">12V</text>
<text x="546.2" y="152" class="a" text-anchor="end">9V</text>
<text x="546.2" y="204" class="a" text-anchor="end">6V</text>
<text x="546.2" y="256" class="a" text-anchor="end">3V</text>
<text x="546.2" y="309" class="a" text-anchor="end">0V</text>
<text x="546.2" y="361" class="a" text-anchor="end">-3V</text>
<text x="546.2" y="413" class="a" text-anchor="end">-6V</text>
<text x="546.2" y="465" class="a" text-anchor="end">-9V</text>
<text x="546.2" y="518" class="a" text-anchor="end">-12V</text>
<text x="546.2" y="570" class="a" text-anchor="end">-15V</text>
<text x="1156" y="47" class="a" text-anchor="end">180mA</text>
<text x="1156" y="99" class="a" text-anchor="end">160mA</text>
<text x="1156" y="152" class="a" text-anchor="end">140mA</text>
<text x="1156" y="204" class="a" text-anchor="end">120mA</text>
<text x="1156" y="256" class="a" text-anchor="end">100mA</text>
<text x="1156" y="309" class="a" text-anchor="end">80mA</text>
<text x="1156" y="361" class="a" text-anchor="end">60mA</text>
<text x="1156" y="413" class="a" text-anchor="end">40mA</text>
<text x="1156" y="465" class="a" text-anchor="end">20mA</text>
<text x="1156" y="518" class="a" text-anchor="end">0mA</text>
<text x="1156" y="570" class="a" text-anchor="end">-20mA</text>
<text x="554.5" y="585.6" class="a" text-anchor="middle">0ms</text>
<text x="609.3" y="585.6" class="a" text-anchor="middle">10ms</text>
<text x="664.1" y="585.6" class="a" text-anchor="middle">20ms</text>
<text x="718.9" y="585.6" class="a" text-anchor="middle">30ms</text>
<text x="773.7" y="585.6" class="a" text-anchor="middle">40ms</text>
<text x="828.5" y="585.6" class="a" text-anchor="middle">50ms</text>
<text x="883.3" y="585.6" class="a" text-anchor="middle">60ms</text>
<text x="938.1" y="585.6" class="a" text-anchor="middle">70ms</text>
<text x="992.9" y="585.6" class="a" text-anchor="middle">80ms</text>
<text x="1047.7" y="585.6" class="a" text-anchor="middle">90ms</text>
<text x="1102.5" y="585.6" class="a" text-anchor="middle">100ms</text>
<text x="625" y="36.9" class="l" fill="#00ff00">V(coil)</text>
<text x="814" y="36.9" class="l" fill="#ff00ff">V(v-)</text>
<text x="991" y="36.9" class="l" fill="#ff0000">Ie(Q6)</text>
<g shape-rendering="crispEdges">
<rect x="667" y="53" width="421" height="349" fill="#d4d0c8"/>
<rect x="667" y="53" width="420" height="1" fill="#d4d0c8"/>
<rect x="668" y="54" width="418" height="1" fill="#fff"/>
<rect x="668" y="54" width="1" height="346" fill="#fff"/>
<rect x="1087" y="53" width="1" height="349" fill="#404040"/>
<rect x="667" y="401" width="421" height="1" fill="#404040"/>
<rect x="1086" y="54" width="1" height="347" fill="#808080"/>
<rect x="668" y="400" width="419" height="1" fill="#808080"/>
<rect x="671" y="57" width="412" height="18" fill="url(#gi)"/>
<rect x="671" y="76" width="412" height="1" fill="#808080"/>
<rect x="671" y="76" width="1" height="321" fill="#808080"/>
<rect x="672" y="77" width="410" height="320" fill="#000"/>
<rect x="1082" y="76" width="1" height="322" fill="#fff"/>
<rect x="671" y="397" width="412" height="1" fill="#fff"/>
</g>
<g transform="translate(673 58)"><g shape-rendering="crispEdges"><rect x="3" y="0" width="13" height="13" fill="#c0c0c0"/><rect x="0" y="0" width="2" height="14" fill="#fff"/><rect x="2" y="14" width="14" height="3" fill="#fff"/><path d="M2.5 0V13.5H16" stroke="#000" fill="none"/><path d="M0 1.5H2M0 4.5H2M0 7.5H2M0 10.5H2M5.5 14V17M8.5 14V17M11.5 14V17M14.5 14V17" stroke="#000" fill="none"/></g><path d="M3 8.5L6.5 4.5H9L11 7H13L16 3.5" stroke="#f00" stroke-width="1.6" fill="none"/></g>
<text x="690.2" y="70" class="t" fill="#d4d0c8" textLength="244.5">IGSL oscillator stabilised_V-minus_extra.fft</text>
<g shape-rendering="crispEdges" transform="translate(1032 59)"><rect x="0" y="0" width="16" height="14" fill="#d4d0c8"/><path d="M0.5 13.5V0.5H15.5" stroke="#fff" fill="none"/><path d="M15.5 0V13.5H0" stroke="#404040" fill="none"/><path d="M14.5 1V12.5H1" stroke="#808080" fill="none"/><rect x="4" y="9" width="6" height="2" fill="#000"/></g>
<g shape-rendering="crispEdges" transform="translate(1048 59)"><rect x="0" y="0" width="16" height="14" fill="#d4d0c8"/><path d="M0.5 13.5V0.5H15.5" stroke="#fff" fill="none"/><path d="M15.5 0V13.5H0" stroke="#404040" fill="none"/><path d="M14.5 1V12.5H1" stroke="#808080" fill="none"/><path d="M3.5 3.5H11.5V10.5H3.5Z" stroke="#000" fill="none"/><rect x="3" y="2" width="9" height="2" fill="#000"/></g>
<g shape-rendering="crispEdges" transform="translate(1066 59)"><rect x="0" y="0" width="16" height="14" fill="#d4d0c8"/><path d="M0.5 13.5V0.5H15.5" stroke="#fff" fill="none"/><path d="M15.5 0V13.5H0" stroke="#404040" fill="none"/><path d="M14.5 1V12.5H1" stroke="#808080" fill="none"/><g fill="#000"><rect x="4" y="3" width="2" height="1"/><rect x="10" y="3" width="2" height="1"/><rect x="5" y="4" width="2" height="1"/><rect x="9" y="4" width="2" height="1"/><rect x="6" y="5" width="2" height="1"/><rect x="8" y="5" width="2" height="1"/><rect x="7" y="6" width="2" height="1"/><rect x="7" y="6" width="2" height="1"/><rect x="8" y="7" width="2" height="1"/><rect x="6" y="7" width="2" height="1"/><rect x="9" y="8" width="2" height="1"/><rect x="5" y="8" width="2" height="1"/><rect x="10" y="9" width="2" height="1"/><rect x="4" y="9" width="2" height="1"/></g></g>
<g shape-rendering="crispEdges" fill="none" stroke="#b4b4b4">
<path d="M719.5 96V378M719 96.5H1028.5M1028.5 96V370M711 370.5H1029"/>
<path d="M711 110.5H719"/>
<path d="M719 110.5H1028" stroke-dasharray="3 3" stroke="#a0a0a0"/>
<path d="M711 139.5H719"/>
<path d="M719 139.5H1028" stroke-dasharray="3 3" stroke="#a0a0a0"/>
<path d="M711 168.5H719"/>
<path d="M719 168.5H1028" stroke-dasharray="3 3" stroke="#a0a0a0"/>
<path d="M711 197.5H719"/>
<path d="M719 197.5H1028" stroke-dasharray="3 3" stroke="#a0a0a0"/>
<path d="M711 226.5H719"/>
<path d="M719 226.5H1028" stroke-dasharray="3 3" stroke="#a0a0a0"/>
<path d="M711 255.5H719"/>
<path d="M719 255.5H1028" stroke-dasharray="3 3" stroke="#a0a0a0"/>
<path d="M711 284.5H719"/>
<path d="M719 284.5H1028" stroke-dasharray="3 3" stroke="#a0a0a0"/>
<path d="M711 313.5H719"/>
<path d="M719 313.5H1028" stroke-dasharray="3 3" stroke="#a0a0a0"/>
<path d="M711 341.5H719"/>
<path d="M719 341.5H1028" stroke-dasharray="3 3" stroke="#a0a0a0"/>
<path d="M812.5 370V378"/>
<path d="M812.5 96V370" stroke-dasharray="3 3" stroke="#a0a0a0"/>
<path d="M866.5 370V378"/>
<path d="M866.5 96V370" stroke-dasharray="3 3" stroke="#a0a0a0"/>
<path d="M934.5 370V378"/>
<path d="M934.5 96V370" stroke-dasharray="3 3" stroke="#a0a0a0"/>
<path d="M997.5 370V378"/>
<path d="M997.5 96V370" stroke-dasharray="3 3" stroke="#a0a0a0"/>
</g>
<polyline points="719.5,290.4 730,288 740,284.8 752,280 765.5,273.4 772,267.5 778,260.8 782,254.5 785.7,248 788.5,240 790.8,230.5 792.2,220 793.3,205 794.2,185 795,150 795.5,111 796,150 796.6,185 797,205 798.2,220 799.6,230.5 802,243 804.6,253 810,264 816,273.4 824,282.5 833.7,291 846,300 860,308.8 866.7,311.4 876,316.5 886.6,321.5 887.4,300 887.6,255.3 888,300 889,319.7 900,325.5 913,331 928,337.5 941,342.4 942,320 942.3,262 942.8,320 944,338.6 950,342 956,344.2 964,346.5 971.3,348.2 979,348.2 980.2,340 980.4,260.3 980.7,358.9 982,355 985,353.8 991.5,354.3 1000,356.5 1010,358.9 1010.4,282.3 1010.6,367.7 1011,359 1020,361 1027,362.6" fill="none" stroke="#00f400" stroke-width="1.15"/>
<text x="710.2" y="115" class="a" text-anchor="end">20dB</text>
<text x="710.2" y="144" class="a" text-anchor="end">10dB</text>
<text x="710.2" y="173" class="a" text-anchor="end">0dB</text>
<text x="710.2" y="202" class="a" text-anchor="end">-10dB</text>
<text x="710.2" y="231" class="a" text-anchor="end">-20dB</text>
<text x="710.2" y="260" class="a" text-anchor="end">-30dB</text>
<text x="710.2" y="289" class="a" text-anchor="end">-40dB</text>
<text x="710.2" y="318" class="a" text-anchor="end">-50dB</text>
<text x="710.2" y="346" class="a" text-anchor="end">-60dB</text>
<text x="710.2" y="375" class="a" text-anchor="end">-70dB</text>
<text x="718.5" y="391" class="a" text-anchor="middle">5KHz</text>
<text x="812.3" y="391" class="a" text-anchor="middle">10KHz</text>
<text x="866" y="391" class="a" text-anchor="middle">15KHz</text>
<text x="933.5" y="391" class="a" text-anchor="middle">25KHz</text>
<text x="997" y="391" class="a" text-anchor="middle">40KHz</text>
<text x="853" y="90" class="l" fill="#00ff00">V(coil)</text>
</svg></body></html>
